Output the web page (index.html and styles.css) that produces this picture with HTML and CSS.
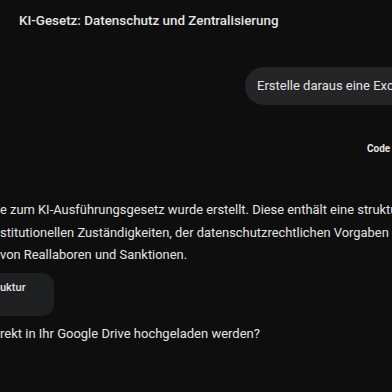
FILE: index.html
```html
<!DOCTYPE html>
<html lang="de">
<head>
<meta charset="utf-8">
<link rel="stylesheet" href="styles.css">
</head>
<body>
<header class="topbar">
  <h1 class="title">KI-Gesetz: Datenschutz und Zentralisierung</h1>
</header>
<main class="chat">
  <div class="user-row">
    <div class="bubble">Erstelle daraus eine Excel-Tabelle</div>
  </div>
  <div class="code-row"><span class="code-label">Code</span></div>
  <p class="answer"><span class="line">e zum KI-Ausführungsgesetz wurde erstellt. Diese enthält eine strukturierte</span><span class="line">stitutionellen Zuständigkeiten, der datenschutzrechtlichen Vorgaben sowie</span><span class="line">von Reallaboren und Sanktionen.</span></p>
  <div class="file-card">
    <span class="file-name">uktur</span>
  </div>
  <p class="question">rekt in Ihr Google Drive hochgeladen werden?</p>
</main>
</body>
</html>
```
FILE: styles.css
```css
html, body {
  margin: 0;
  padding: 0;
  background: #0e0e0f;
  overflow: hidden;
  width: 392px;
  height: 392px;
}
body {
  font-family: Roboto, "Noto Sans", sans-serif;
  color: #e3e3e3;
}
.topbar {
  height: 42px;
  padding: 11px 0 0 19px;
  box-sizing: border-box;
}
.title {
  margin: 0;
  font-size: 13.4px;
  line-height: 20px;
  font-weight: 500;
  white-space: nowrap;
}
.chat {
  display: flex;
  flex-direction: column;
}
.user-row {
  margin-top: 25px;
  padding-left: 245px;
}
.bubble {
  background: #242527;
  height: 38px;
  line-height: 38px;
  padding: 0 12px;
  border-radius: 19px 0 0 19px;
  font-size: 13px;
  white-space: nowrap;
  width: max-content;
}
.code-row {
  margin-top: 37px;
  padding-left: 367px;
  white-space: nowrap;
}
.code-label {
  font-size: 10px;
  line-height: 14px;
  font-weight: 700;
  display: block;
}
.answer {
  margin: 43px 0 0 0;
  font-size: 12.9px;
  line-height: 22.5px;
}
.line {
  display: block;
  white-space: nowrap;
}
.file-card {
  margin-top: 6px;
  margin-left: -120px;
  width: 174px;
  height: 43px;
  box-sizing: border-box;
  background: #1e1f21;
  border-radius: 12px;
  padding: 8px 0 0 120px;
}
.file-name {
  font-size: 11px;
  font-weight: 500;
  line-height: 14px;
  display: block;
}
.question {
  margin: 7px 0 0 0;
  font-size: 13px;
  line-height: 22px;
  white-space: nowrap;
}
```
